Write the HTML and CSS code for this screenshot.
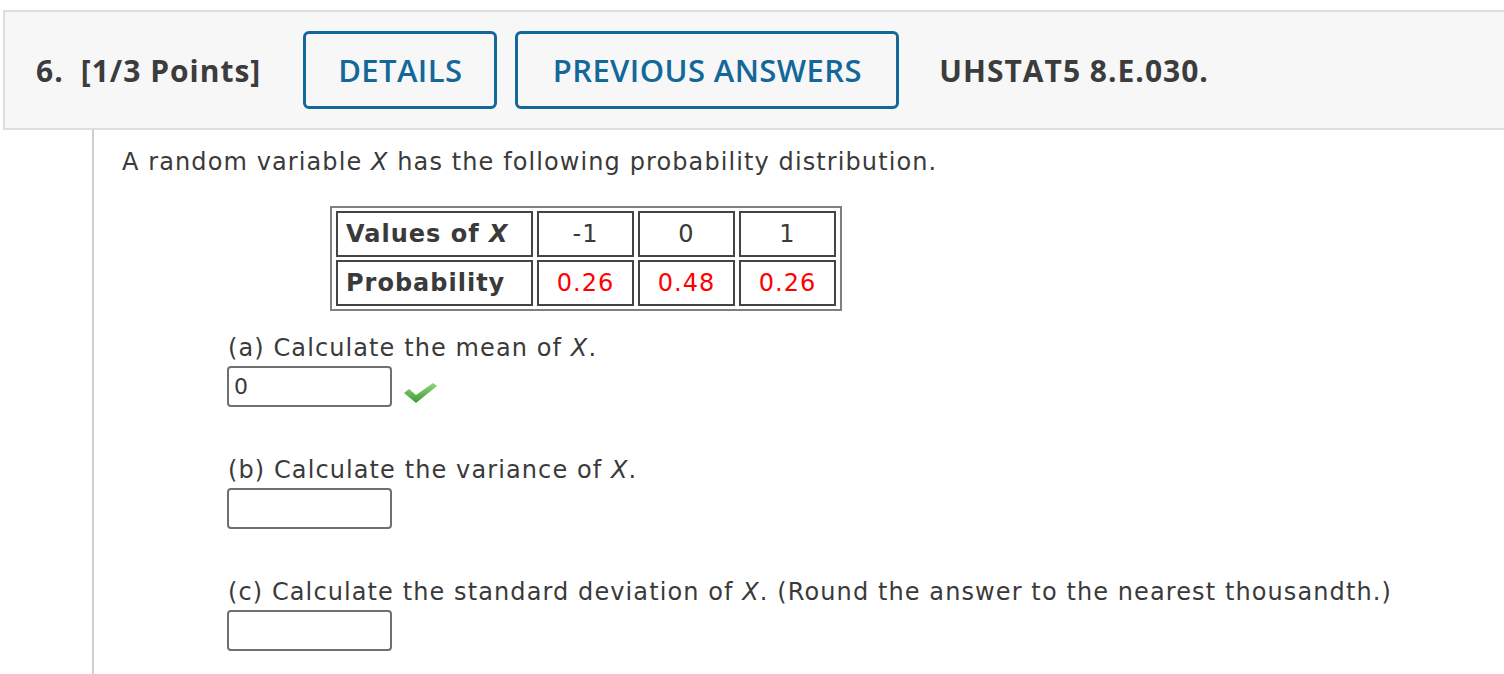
FILE: index.html
```html
<!DOCTYPE html>
<html>
<head>
<meta charset="utf-8">
<link rel="stylesheet" href="styles.css">
</head>
<body>
<div class="qhead">
  <span class="qnum">6.</span>
  <span class="qpts">[1/3 Points]</span>
  <span class="btn btn-details">DETAILS</span>
  <span class="btn btn-prev">PREVIOUS ANSWERS</span>
  <span class="qcode">UHSTAT5 8.E.030.</span>
</div>
<div class="qbody">
  <p class="intro">A random variable <i>X</i> has the following probability distribution.</p>
  <table class="dist">
    <tr><th>Values of <i>X</i></th><td>-1</td><td>0</td><td>1</td></tr>
    <tr><th>Probability</th><td class="red">0.26</td><td class="red">0.48</td><td class="red">0.26</td></tr>
  </table>
  <div class="part part-first">
    <div class="ptext">(a) Calculate the mean of <i>X</i>.</div>
    <div class="ansrow">
      <span class="ans">0</span>
      <svg class="check" width="36" height="22" viewBox="0 0 36 22">
        <defs><linearGradient id="g" x1="0" y1="0" x2="0" y2="1"><stop offset="0" stop-color="#93d67f"/><stop offset="1" stop-color="#3f9a34"/></linearGradient></defs>
        <path d="M1 11 L6 7 L13 13 L30 1 L34 4 L13 21 Z" fill="url(#g)"/>
      </svg>
    </div>
  </div>
  <div class="part">
    <div class="ptext">(b) Calculate the variance of <i>X</i>.</div>
    <div class="ansrow"><span class="ans"></span></div>
  </div>
  <div class="part">
    <div class="ptext">(c) Calculate the standard deviation of <i>X</i>. (Round the answer to the nearest thousandth.)</div>
    <div class="ansrow"><span class="ans"></span></div>
  </div>
</div>
</body>
</html>
```
FILE: styles.css
```css
html, body { margin: 0; padding: 0; background: #fff; }
body { font-family: "DejaVu Sans", Verdana, sans-serif; color: #3a3a3a; overflow: hidden; height: 674px; }
.qhead {
  margin: 10px 0 0 3px;
  height: 116px;
  border: 2px solid #dedede;
  border-right: none;
  background: #f7f7f7;
  display: flex;
  align-items: center;
  padding-left: 31px;
  font-family: "Open Sans", sans-serif;
  font-weight: 700;
  font-size: 30px;
  letter-spacing: 1px;
  color: #3c3c3c;
}
.qnum { margin-right: 17px; }
.qpts { margin-right: 42px; }
.btn {
  box-sizing: border-box;
  height: 78px;
  border: 3px solid #13689a;
  border-radius: 6px;
  color: #13689a;
  display: flex;
  align-items: center;
  justify-content: center;
  font-weight: 600;
  font-size: 31px;
  letter-spacing: 0.4px;
}
.btn-details { width: 194px; margin-right: 18px; }
.btn-prev { width: 384px; margin-right: 40px; }
.qbody {
  margin-left: 92px;
  border-left: 2px solid #cfcfcf;
  padding-left: 28px;
  height: 545px;
}
.intro { margin: 0; padding-top: 17px; font-size: 24px; line-height: 30px; letter-spacing: 1.1px; }
.dist {
  margin: 29px 0 0 208px;
  border: 2px solid #808080;
  border-collapse: separate;
  border-spacing: 4px 3px;
  padding: 0;
  font-size: 24px;
  letter-spacing: 1px;
}
.dist th, .dist td {
  border: 2px solid #444;
  height: 42px;
  padding: 0;
}
.dist th { text-align: left; padding-left: 8px; width: 185px; font-weight: bold; }
.dist td { text-align: center; width: 93px; }
.red { color: #f00; }
.part { margin-left: 106px; margin-top: 48px; }
.part-first { margin-top: 22px; }
.ptext { font-size: 24px; line-height: 30px; letter-spacing: 1.1px; }
.ansrow { display: flex; align-items: flex-start; margin-top: 3px; }
.ans {
  box-sizing: border-box;
  width: 165px;
  height: 41px;
  border: 2px solid #6f6f6f;
  border-radius: 4px;
  font-size: 22px;
  padding-left: 5px;
  line-height: 37px;
  margin-left: -1px;
}
.check { margin-left: 11px; margin-top: 16px; }
```
